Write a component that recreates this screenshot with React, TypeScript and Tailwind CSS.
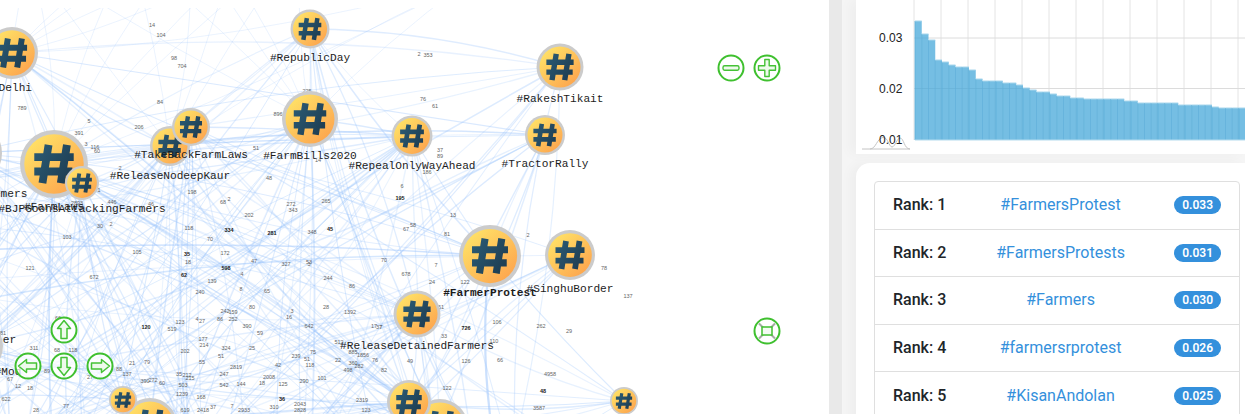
const W = 829;
const H = 414;

type GraphNode = { x: number; y: number; r: number; label?: string; lx?: number; ly?: number; bold?: boolean };

const nodes: GraphNode[] = [
  { x: 12, y: 53, r: 26, label: "#Delhi", lx: 12, ly: 91 },
  { x: 310, y: 29, r: 19.5, label: "#RepublicDay", ly: 61 },
  { x: 560, y: 67, r: 23.5, label: "#RakeshTikait", ly: 102 },
  { x: 310, y: 119, r: 28, label: "#FarmBills2020", ly: 159 },
  { x: 412, y: 136, r: 20.5, label: "#RepealOnlyWayAhead", ly: 169 },
  { x: 545, y: 135, r: 20, label: "#TractorRally", ly: 167 },
  { x: 170, y: 146, r: 20, label: "#ReleaseNodeepKaur", ly: 179 },
  { x: 191, y: 127, r: 19, label: "#TakeBackFarmLaws", ly: 158 },
  { x: -31, y: 153, r: 33, label: "#StandWithFarmers", lx: -29.500, ly: 197 },
  { x: 54, y: 164, r: 34, label: "#FarmLaws", ly: 210 },
  { x: 82, y: 183, r: 17, label: "#BJPGoonsAttackingFarmers", ly: 212 },
  { x: 490, y: 256, r: 31, label: "#FarmerProtest", ly: 296, bold: true },
  { x: 570, y: 255, r: 25, label: "#SinghuBorder", ly: 292 },
  { x: 417, y: 314, r: 23.5, label: "#ReleaseDetainedFarmers", ly: 349 },
  { x: -26, y: 346, r: 29, label: "er", lx: 9.500, ly: 343 },
  { x: -26, y: 346, r: 0, label: "#Mod", lx: 8, ly: 375 },
  { x: 440, y: 427, r: 28 },
  { x: 409, y: 402, r: 22 },
  { x: 150, y: 425, r: 27 },
  { x: 123, y: 400, r: 14 },
  { x: 624, y: 401, r: 14 },
];

const weights: [string, number, number][] = [
  ["14", 152, 25], ["104", 161, 35], ["98", 174, 58], ["704", 182, 66], ["789", 22, 108], ["84", 160, 102],
  ["5", 89, 121], ["206", 139, 127], ["391", 79, 133], ["3", 86, 144], ["116", 95, 147], ["60", 97, 151],
  ["2", 120, 168], ["51", 256, 148], ["48", 269, 178], ["198", 192, 192], ["68", 223, 202], ["2", 229, 199],
  ["272", 291, 204], ["343", 293, 210], ["202", 249, 215], ["446", 112, 202], ["46", 151, 204], ["2893", 77, 203],
  ["1", 99, 190], ["896", 278, 114], ["2", 419, 54], ["353", 428, 55], ["76", 423, 99], ["61", 435, 106],
  ["37", 440, 150], ["89", 440, 156], ["186", 427, 172], ["14", 318, 160], ["225", 307, 91], ["6", 402, 186],
  ["30", 100, 226], ["2", 111, 224], ["103", 67, 237], ["118", 189, 228], ["70", 210, 239], ["105", 137, 252],
  ["18", 188, 262], ["121", 30, 268], ["672", 94, 277], ["139", 212, 281], ["240", 200, 292], ["265", 326, 201],
  ["348", 312, 232], ["67", 406, 229], ["58", 413, 225], ["172", 225, 253], ["47", 254, 261], ["327", 286, 264],
  ["53", 309, 262], ["3", 309, 264], ["70", 384, 260], ["4", 242, 274], ["678", 406, 274], ["244", 328, 278],
  ["86", 352, 286], ["8", 241, 289], ["65", 267, 291], ["242", 225, 311], ["159", 233, 312], ["80", 252, 307],
  ["3", 292, 311], ["28", 326, 307], ["1392", 350, 312], ["16", 289, 317], ["123", 180, 322], ["4", 197, 319],
  ["27", 202, 321], ["86", 220, 319], ["252", 233, 319], ["390", 247, 326], ["642", 309, 326], ["17", 374, 326],
  ["37", 379, 327], ["519", 172, 329], ["59", 260, 333], ["177", 203, 339], ["214", 204, 345], ["512", 339, 342],
  ["324", 226, 348], ["25", 252, 348], ["202", 185, 351], ["885", 353, 352], ["75", 313, 352], ["1856", 363, 355],
  ["51", 221, 356], ["239", 296, 356], ["51", 307, 359], ["22", 338, 360], ["76", 375, 360], ["55", 202, 362],
  ["79", 147, 362], ["21", 132, 363], ["118", 310, 365], ["360", 353, 363], ["282", 359, 366], ["2819", 236, 367],
  ["42", 278, 365], ["498", 348, 370], ["82", 384, 370], ["88", 119, 369], ["137", 127, 374], ["35", 179, 374],
  ["212", 187, 375], ["215", 190, 378], ["247", 224, 374], ["2008", 269, 377], ["390", 145, 381], ["272", 153, 380],
  ["60", 162, 383], ["290", 304, 381], ["101", 322, 378], ["503", 183, 385], ["542", 224, 385], ["144", 241, 384],
  ["18", 262, 383], ["125", 283, 384], ["1239", 182, 394], ["168", 201, 397], ["2043", 300, 404], ["2319", 362, 400],
  ["37", 213, 407], ["7", 232, 406], ["310", 274, 407], ["619", 185, 410], ["123", 366, 410], ["2933", 244, 410],
  ["2418", 203, 410], ["2828", 300, 410], ["122", 447, 388], ["13", 453, 215], ["81", 447, 234], ["2", 528, 235],
  ["7", 436, 265], ["24", 432, 282], ["122", 465, 282], ["78", 604, 268], ["51", 441, 307], ["7", 381, 327],
  ["106", 497, 322], ["262", 541, 326], ["29", 569, 331], ["33", 444, 336], ["110", 494, 341], ["49", 410, 361],
  ["126", 466, 361], ["66", 500, 360], ["4958", 550, 374], ["3587", 539, 408], ["137", 628, 296], ["311", 34, 348],
  ["68", 57, 350], ["118", 73, 350], ["66", 58, 318], ["81", 3, 333], ["67", 10, 379], ["12", 18, 386],
  ["18", 30, 388], ["622", 6, 399], ["28", 36, 410], ["77", 66, 406], ["89", 47, 371], ["27", 90, 377],
];

const darkWeights: [string, number, number][] = [
  ["195", 400, 198], ["334", 229, 230], ["281", 272, 233], ["45", 330, 229], ["35", 187, 254], ["62", 184, 275],
  ["598", 226, 268], ["120", 146, 327], ["36", 282, 399], ["726", 466, 328], ["48", 543, 391],
];

// seeded so the web comes out the same on every load
function makeRandom(seed: number) {
  let s = seed;
  return () => {
    s = (s + 0x6d2b79f5) | 0;
    let t = Math.imul(s ^ (s >>> 15), 1 | s);
    t = (t + Math.imul(t ^ (t >>> 7), 61 | t)) ^ t;
    return ((t ^ (t >>> 14)) >>> 0) / 4294967296;
  };
}

function buildEdges() {
  const rand = makeRandom(1177);
  const hubs: [number, number][] = nodes.filter((n) => n.r > 0).map((n) => [n.x, n.y]);
  const lower: [number, number][] = [];
  for (let i = 0; i < 26; i++) lower.push([-60 + rand() * 640, 425 + rand() * 120]);
  for (let i = 0; i < 10; i++) lower.push([-70 - rand() * 60, 170 + rand() * 300]);
  const edges: { d: string; w: number; o: number }[] = [];
  const add = (a: [number, number], b: [number, number], w = 1, o = 0.3) => {
    const bend = (rand() - 0.5) * 0.16;
    const mx = (a[0] + b[0]) / 2 - (b[1] - a[1]) * bend;
    const my = (a[1] + b[1]) / 2 + (b[0] - a[0]) * bend;
    edges.push({ d: `M${a[0]} ${a[1]}Q${mx.toFixed(1)} ${my.toFixed(1)} ${b[0]} ${b[1]}`, w, o });
  };
  for (let i = 0; i < hubs.length; i++) {
    for (let j = i + 1; j < hubs.length; j++) {
      if (rand() < 0.45) add(hubs[i], hubs[j], 0.9 + rand() * 0.7, 0.2 + rand() * 0.16);
    }
    for (const p of lower) {
      const far = hubs[i][0] > 480 ? 0.15 : hubs[i][1] < 100 ? 0.22 : 0.38;
      if (rand() < far) add(hubs[i], p, 0.9 + rand() * 0.6, 0.2 + rand() * 0.14);
    }
  }
  // a few stray edges running off the top of the canvas
  const tops: [number, number][] = [[30, -40], [190, -60], [230, -30], [300, -60], [470, -20], [130, -50]];
  for (const t of tops) for (const h of [hubs[3], hubs[0], hubs[6], hubs[9]]) add(t, h, 0.9, 0.22);
  // the heavy bundles under the big hubs
  add([490, 256], [-20, 250], 1.6, 0.45);
  add([490, 256], [-20, 300], 1.4, 0.4);
  add([490, 256], [492, 430], 2.2, 0.5);
  add([310, 119], [312, 430], 1.8, 0.35);
  add([54, 164], [52, 430], 1.5, 0.35);
  return edges;
}

const edges = buildEdges();

function HashNode({ node }: { node: GraphNode }) {
  const { x, y, r } = node;
  if (r <= 0) return null;
  const s = r / 50;
  return (
    <g transform={`translate(${x} ${y})`}>
      <circle r={r} fill="#cbcbcb" />
      <circle r={r * 0.875} fill="url(#nodeFill)" />
      <path
        transform={`scale(${s})`}
        d="M-8 -28L-17 28M19 -28L10 28M-29 -10H29M-29 11H27"
        fill="none"
        stroke="url(#hashFill)"
        strokeWidth={11.5}
      />
    </g>
  );
}

function Graph() {
  return (
    <svg viewBox={`0 0 ${W} ${H}`} className="block h-[414px] w-[829px]">
      <defs>
        <linearGradient id="nodeFill" x1="0.15" y1="0.1" x2="0.9" y2="0.9">
          <stop offset="0" stopColor="#ffe066" />
          <stop offset="1" stopColor="#fda54e" />
        </linearGradient>
        <linearGradient id="hashFill" x1="0" y1="0" x2="1" y2="0.6">
          <stop offset="0" stopColor="#2b5c76" />
          <stop offset="1" stopColor="#1f3f54" />
        </linearGradient>
        <clipPath id="canvasClip">
          <rect x="0" y="8" width={W} height={H} />
        </clipPath>
      </defs>
      <g clipPath="url(#canvasClip)">
        {edges.map((e, i) => (
          <path key={i} d={e.d} fill="none" stroke="#97c2fc" strokeWidth={e.w} strokeOpacity={e.o} />
        ))}
        {weights.map(([t, x, y], i) => (
          <text key={i} x={x} y={y + 2} textAnchor="middle" className="fill-[#666] font-['Liberation_Sans'] text-[5.5px]">
            {t}
          </text>
        ))}
        {darkWeights.map(([t, x, y], i) => (
          <text key={i} x={x} y={y + 2} textAnchor="middle" className="fill-[#222] font-['Liberation_Sans'] text-[5.5px] font-bold">
            {t}
          </text>
        ))}
        {nodes.map((n, i) => (
          <HashNode key={i} node={n} />
        ))}
        {nodes.map((n, i) =>
          n.label ? (
            <text
              key={i}
              x={n.lx ?? n.x}
              y={n.ly}
              textAnchor="middle"
              className={`fill-[#1c1c1c] font-['Liberation_Mono'] text-[11.15px] ${n.bold ? "font-bold" : ""}`}
            >
              {n.label}
            </text>
          ) : null,
        )}
      </g>
    </svg>
  );
}

function NavButton({ className, children, label }: { className: string; children: React.ReactNode; label: string }) {
  return (
    <button aria-label={label} className={`absolute h-[28px] w-[28px] ${className}`}>
      <svg viewBox="-14 -14 28 28" className="h-full w-full">
        <circle r="12.5" fill="#fff" fillOpacity="0.75" stroke="#3fc02f" strokeWidth="2" />
        {children}
      </svg>
    </button>
  );
}

const arrowPath = "M0 -9.5L6.5 -1.5H3V8.5H-3V-1.5H-6.5Z";

function Arrow({ rotate }: { rotate: number }) {
  return <path d={arrowPath} transform={`rotate(${rotate})`} fill="#eefaec" stroke="#45c236" strokeWidth="1.5" strokeLinejoin="round" />;
}

function Controls() {
  return (
    <>
      <NavButton label="up" className="left-[50px] top-[316px]">
        <Arrow rotate={0} />
      </NavButton>
      <NavButton label="left" className="left-[14px] top-[352px]">
        <Arrow rotate={-90} />
      </NavButton>
      <NavButton label="down" className="left-[50px] top-[352px]">
        <Arrow rotate={180} />
      </NavButton>
      <NavButton label="right" className="left-[86px] top-[352px]">
        <Arrow rotate={90} />
      </NavButton>
      <NavButton label="zoom out" className="left-[717px] top-[54px]">
        <rect x="-8" y="-2.2" width="16" height="4.4" rx="1.6" fill="#eefaec" stroke="#45c236" strokeWidth="1.4" />
      </NavButton>
      <NavButton label="zoom in" className="left-[753px] top-[54px]">
        <path
          d="M-2.2 -8.5H2.2V-2.2H8.5V2.2H2.2V8.5H-2.2V2.2H-8.5V-2.2H-2.2Z"
          fill="#eefaec"
          stroke="#45c236"
          strokeWidth="1.4"
          strokeLinejoin="round"
        />
      </NavButton>
      <NavButton label="fit" className="left-[753px] top-[317px]">
        <path d="M-4 -3.500L-8 -7.500M4 -3.500L8 -7.500M-4 3.500L-8 7.500M4 3.500L8 7.500" stroke="#a3aba2" strokeWidth="2" />
        <rect x="-5" y="-4" width="10" height="8" fill="#f4fbf3" stroke="#3fc02f" strokeWidth="1.5" />
      </NavButton>
    </>
  );
}

// bar tops in px, read off the chart
const barTops = [
  21, 34, 40, 60, 62, 65, 67, 67, 70, 79, 81, 81, 81, 83, 83, 85, 88, 90, 92, 92, 94, 96, 96, 98, 98, 99, 99, 99, 99,
  99, 99, 101, 101, 103, 103, 103, 103, 103, 103, 105, 105, 105, 105, 105, 107, 108, 108, 108, 108, 110, 110, 111,
];

function Chart() {
  const vertical = [914, 941, 968, 995, 1022, 1049, 1076, 1103, 1130, 1157, 1184, 1211, 1238];
  return (
    <svg viewBox="856 0 389 154" className="block h-[154px] w-[389px]">
      {vertical.map((x) => (
        <line key={x} x1={x} x2={x} y1="0" y2="140" stroke="#e4e4e4" />
      ))}
      <line x1="914" x2="1245" y1="38" y2="38" stroke="#dcdcdc" />
      <line x1="914" x2="1245" y1="88.5" y2="88.5" stroke="#dcdcdc" />
      {barTops.map((top, i) => (
        <g key={i}>
          <rect x={915 + i * 6.75} y={top} width="6.75" height={140 - top} fill="#47a8d9" fillOpacity="0.75" />
          <line x1={915 + i * 6.75} x2={915 + i * 6.75} y1={top} y2="140" stroke="#5dafd9" strokeWidth="0.8" />
          <line x1={915 + i * 6.75} x2={921.75 + i * 6.75} y1={top} y2={top} stroke="#a9d6ec" strokeWidth="1" />
        </g>
      ))}
      <line x1="915" x2="1245" y1="140" y2="140" stroke="#b5dcee" />
      <path
        d="M862 149H870C876 149 877 138 883 137.500C888 137 889 147 892 147C895 147 897 138 900 138C904 138 904 149 910 149"
        fill="none"
        stroke="#c4c4c4"
        strokeWidth="1"
      />
      <path d="M870 149H910" fill="none" stroke="#c4c4c4" strokeWidth="1" />
      {[
        ["0.03", 42],
        ["0.02", 93],
        ["0.01", 144],
      ].map(([t, y]) => (
        <text key={t} x="879" y={y} className="fill-[#222] font-['Liberation_Sans'] text-[12px]">
          {t}
        </text>
      ))}
    </svg>
  );
}

const ranks = [
  { tag: "#FarmersProtest", score: "0.033" },
  { tag: "#FarmersProtests", score: "0.031" },
  { tag: "#Farmers", score: "0.030" },
  { tag: "#farmersrprotest", score: "0.026" },
  { tag: "#KisanAndolan", score: "0.025" },
];

export default function App() {
  return (
    <div className="flex h-[414px] w-[1245px] overflow-hidden bg-white font-['Roboto',sans-serif]">
      <section className="relative w-[829px] shrink-0">
        <Graph />
        <Controls />
      </section>
      <div className="w-[13px] shrink-0 bg-[#e9e9e9]" />
      <main className="flex min-w-0 flex-1 flex-col gap-[9px] bg-[#f5f5f5] pl-[14px]">
        <div className="h-[154px] shrink-0 bg-white shadow-[-6px_0_12px_rgba(0,0,0,0.03)]">
          <Chart />
        </div>
        <div className="flex-1 rounded-tl-[14px] bg-white py-[18px] pl-[18px] pr-[5px] shadow-[-6px_0_12px_rgba(0,0,0,0.03)]">
          <ul className="rounded-[4px] border border-[#dfdfdf]">
            {ranks.map((row, i) => (
              <li key={row.tag} className="flex h-[47.6px] items-center border-b border-[#dfdfdf] px-[18px] last:border-b-0">
                <span className="w-[54px] shrink-0 whitespace-nowrap text-[16px] font-medium text-[#212529]">Rank: {i + 1}</span>
                <a className="flex-1 text-center text-[16px] text-[#3490dc]">{row.tag}</a>
                <span className="flex h-[18px] min-w-[46px] items-center justify-center rounded-full bg-[#3490dc] px-[8px] text-[12px] font-semibold text-white">
                  {row.score}
                </span>
              </li>
            ))}
          </ul>
        </div>
      </main>
    </div>
  );
}
